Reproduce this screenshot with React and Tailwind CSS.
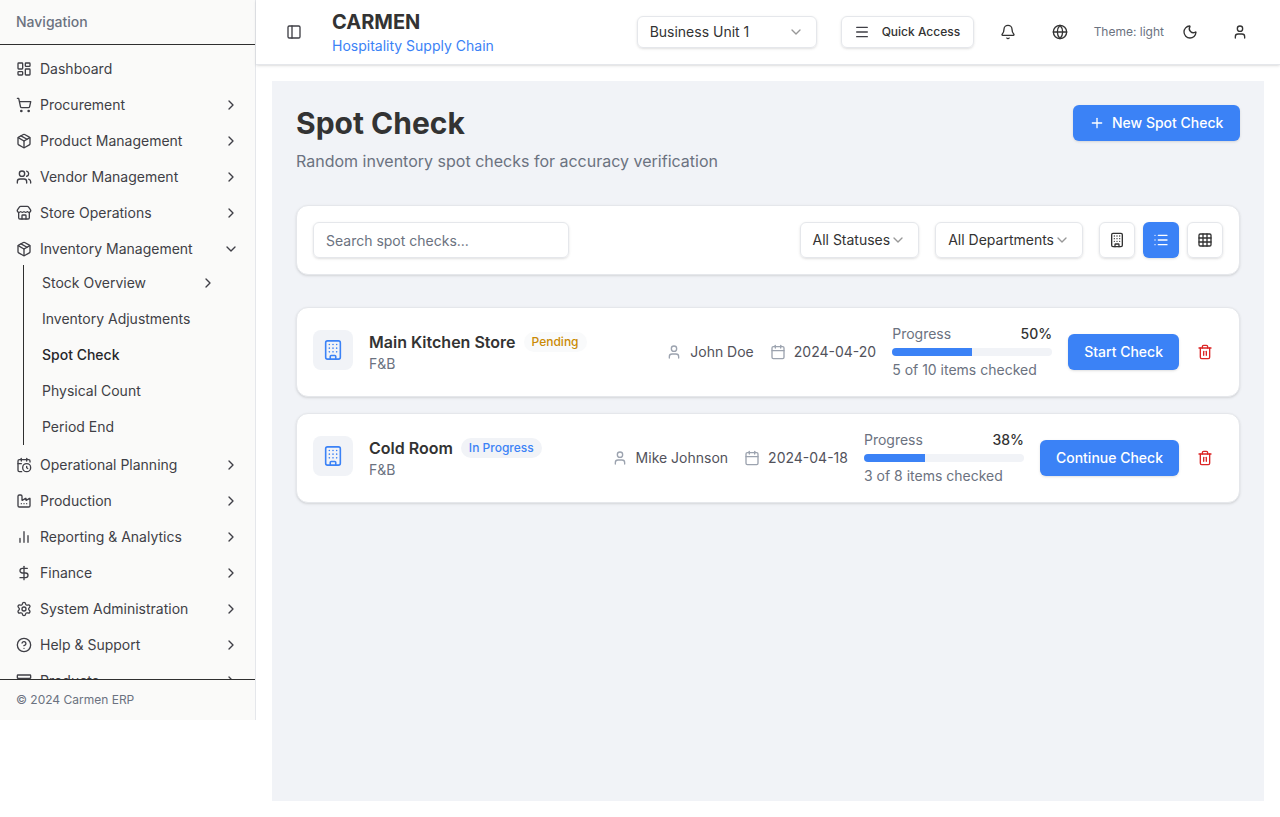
import React from 'react';
import {
  LayoutDashboard, ShoppingCart, Package, Users, Store, CalendarClock, Factory,
  DollarSign, Settings, CircleHelp, Archive, ChevronRight, ChevronDown, PanelLeft, Menu, Bell, Globe,
  Moon, User, Plus, Building, List, Grid3x3, Calendar, Trash2,
} from 'lucide-react';

function BarsIcon({ size = 16, strokeWidth = 2, className }) {
  return (
    <svg width={size} height={size} viewBox="0 0 24 24" fill="none" stroke="currentColor" strokeWidth={strokeWidth} strokeLinecap="round" className={className}>
      <path d="M18 20V10M12 20V4M6 20v-6" />
    </svg>
  );
}

const navTop = [
  { label: 'Dashboard', icon: LayoutDashboard, noArrow: true },
  { label: 'Procurement', icon: ShoppingCart },
  { label: 'Product Management', icon: Package },
  { label: 'Vendor Management', icon: Users },
  { label: 'Store Operations', icon: Store },
];

const navBottom = [
  { label: 'Operational Planning', icon: CalendarClock },
  { label: 'Production', icon: Factory },
  { label: 'Reporting & Analytics', icon: BarsIcon },
  { label: 'Finance', icon: DollarSign },
  { label: 'System Administration', icon: Settings },
  { label: 'Help & Support', icon: CircleHelp },
  { label: 'Products', icon: Archive },
];

const subItems = ['Stock Overview', 'Inventory Adjustments', 'Spot Check', 'Physical Count', 'Period End'];

const checks = [
  { name: 'Main Kitchen Store', status: 'Pending', person: 'John Doe', date: '2024-04-20', pct: 50, done: '5 of 10 items checked', action: 'Start Check' },
  { name: 'Cold Room', status: 'In Progress', person: 'Mike Johnson', date: '2024-04-18', pct: 38, done: '3 of 8 items checked', action: 'Continue Check' },
];

function NavItem({ item, open }) {
  const Icon = item.icon;
  const Arrow = open ? ChevronDown : ChevronRight;
  return (
    <div className="h-8 shrink-0 px-2 flex items-center text-sm text-[#3f3f46]">
      <Icon size={16} strokeWidth={2} className="mr-2 shrink-0" />
      <span className="flex-1">{item.label}</span>
      {!item.noArrow && <Arrow size={16} />}
    </div>
  );
}

function Sidebar() {
  return (
    <aside className="w-[256px] h-[720px] shrink-0 flex flex-col bg-[#fafaf9] border-r border-[#e5e7eb]">
      <div className="px-4 py-3 border-b border-[#2f2f2f] text-sm font-medium text-[#6b7280]">Navigation</div>
      <nav className="flex-1 min-h-0 overflow-hidden px-2 pt-2 flex flex-col gap-1">
        {navTop.map((item) => <NavItem key={item.label} item={item} />)}
        <div className="shrink-0">
          <NavItem item={{ label: 'Inventory Management', icon: Package }} open />
          <div className="ml-[15px] mr-[23px] border-l border-[#2f2f2f] py-0.5 flex flex-col gap-1">
            {subItems.map((label, i) => (
              <div key={label} className={`h-8 ml-[10px] px-2 flex items-center text-sm ${label === 'Spot Check' ? 'font-medium text-[#27272a]' : 'text-[#3f3f46]'}`}>
                <span className="flex-1">{label}</span>
                {i === 0 && <ChevronRight size={16} />}
              </div>
            ))}
          </div>
        </div>
        {navBottom.map((item) => <NavItem key={item.label} item={item} />)}
      </nav>
      <div className="p-3 pl-4 border-t border-[#2f2f2f] text-xs leading-4 text-[#6b7280]">© 2024 Carmen ERP</div>
    </aside>
  );
}

function Header() {
  return (
    <header className="h-[65px] shrink-0 flex items-center bg-white border-b border-[#e5e7eb] shadow-sm text-[#3f3f46]">
      <PanelLeft size={16} className="ml-[30px]" />
      <div className="ml-[30px]">
        <div className="text-xl leading-7 font-bold text-[#333333]">CARMEN</div>
        <div className="text-sm leading-5 text-[#3b82f6]">Hospitality Supply Chain</div>
      </div>
      <div className="ml-auto w-[180px] h-8 px-3 flex items-center justify-between rounded-md border border-[#e5e7eb] shadow-sm text-sm text-[#333333]">
        Business Unit 1
        <ChevronDown size={16} className="opacity-50" />
      </div>
      <div className="ml-6 h-8 w-[133px] flex items-center rounded-md border border-[#e5e7eb] shadow-sm text-xs font-medium text-[#333333]">
        <Menu size={16} className="ml-[12px] mr-3 text-[#3f3f46]" />
        Quick Access
      </div>
      <Bell size={16} className="ml-[26px] text-[#333333]" />
      <Globe size={16} className="ml-9 text-[#333333]" />
      <span className="ml-[26px] text-xs text-[#6b7280]">Theme: light</span>
      <Moon size={16} className="ml-[18px] text-[#333333]" />
      <User size={16} className="ml-[34px] mr-8 text-[#333333]" />
    </header>
  );
}

function Toolbar() {
  return (
    <div className="mb-8 p-4 flex items-center justify-between bg-white border border-[#e5e7eb] rounded-xl shadow-sm">
      <div className="w-64 h-9 px-3 pt-0.5 flex items-center rounded-md border border-[#e5e7eb] shadow-sm text-sm text-[#6b7280]">Search spot checks...</div>
      <div className="flex items-center gap-4">
        {['All Statuses', 'All Departments'].map((label) => (
          <div key={label} className="h-9 px-3 flex items-center rounded-md border border-[#e5e7eb] shadow-sm text-sm text-[#333333]">
            {label}
            <ChevronDown size={16} className="opacity-50" />
          </div>
        ))}
        <div className="flex items-center gap-2">
          <div className="w-9 h-9 flex items-center justify-center rounded-md border border-[#e5e7eb] shadow-sm text-[#333333]"><Building size={16} /></div>
          <div className="w-9 h-9 flex items-center justify-center rounded-md bg-[#3b82f6] shadow-sm text-white"><List size={16} /></div>
          <div className="w-9 h-9 flex items-center justify-center rounded-md border border-[#e5e7eb] shadow-sm text-[#333333]"><Grid3x3 size={16} /></div>
        </div>
      </div>
    </div>
  );
}

function CheckCard({ check }) {
  const pending = check.status === 'Pending';
  return (
    <div className="p-4 flex items-center justify-between bg-white border border-[#e5e7eb] rounded-xl shadow-sm">
      <div className="flex items-start gap-4">
        <div className="w-10 h-10 flex items-center justify-center rounded-lg bg-[#f1f3f7] text-[#3b82f6]"><Building size={22} strokeWidth={1.75} /></div>
        <div>
          <div className="flex items-center gap-2">
            <span className="font-semibold text-[#333333]">{check.name}</span>
            <span className={`px-2 py-0.5 rounded-full text-xs font-medium ${pending ? 'bg-[#f9fafb] text-[#ca8a04]' : 'bg-[#f1f3f7] text-[#3b82f6]'}`}>{check.status}</span>
          </div>
          <div className="text-sm text-[#6b7280]">F&amp;B</div>
        </div>
      </div>
      <div className="flex items-center gap-4 text-sm text-[#52525b]">
        <div className="flex items-center gap-2"><User size={16} strokeWidth={2} className="text-[#9ca3af]" />{check.person}</div>
        <div className="flex items-center gap-2"><Calendar size={16} strokeWidth={2} className="text-[#9ca3af]" />{check.date}</div>
        <div className="w-40 flex flex-col gap-1">
          <div className="flex justify-between text-[#6b7280]">Progress<span className="font-medium text-[#333333]">{check.pct}%</span></div>
          <div className="h-2 rounded-full bg-[#f1f3f7] overflow-hidden">
            <div className="h-full bg-[#3b82f6]" style={{ width: `${check.pct}%` }} />
          </div>
          <div className="text-[#6b7280]">{check.done}</div>
        </div>
        <div className="flex items-center gap-2">
          <div className="h-9 px-4 flex items-center rounded-md bg-[#3b82f6] shadow-sm font-medium text-white">{check.action}</div>
          <div className="w-9 h-9 flex items-center justify-center text-[#dc2626]"><Trash2 size={16} /></div>
        </div>
      </div>
    </div>
  );
}

export default function App() {
  return (
    <div className="h-[817px] flex items-start overflow-hidden bg-white [font-family:Inter,sans-serif]">
      <Sidebar />
      <div className="flex-1 min-w-0 flex flex-col">
        <Header />
        <div className="p-4">
          <main className="h-[720px] p-6 bg-[#f1f3f7]">
            <div className="mb-8 flex items-start justify-between">
              <div>
                <h1 className="text-3xl leading-9 font-bold text-[#333333]">Spot Check</h1>
                <p className="mt-2 text-[#6b7280]">Random inventory spot checks for accuracy verification</p>
              </div>
              <div className="h-9 w-[167px] flex items-center rounded-md bg-[#3b82f6] shadow-sm text-sm font-medium text-white">
                <Plus size={16} className="ml-4 mr-[7px]" />
                New Spot Check
              </div>
            </div>
            <Toolbar />
            <div className="flex flex-col gap-4">
              {checks.map((c) => <CheckCard key={c.name} check={c} />)}
            </div>
          </main>
        </div>
      </div>
    </div>
  );
}
